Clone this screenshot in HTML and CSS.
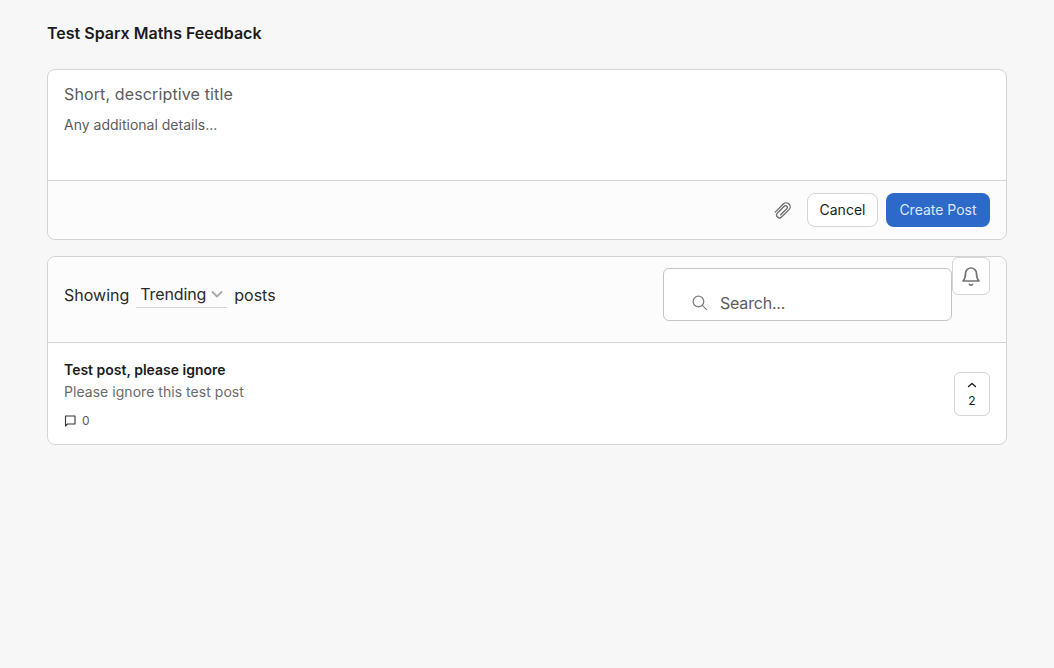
FILE: index.html
```html
<!DOCTYPE html>
<html lang="en">
<head>
<meta charset="utf-8">
<title>Test Sparx Maths Feedback</title>
<link rel="stylesheet" href="styles.css">
</head>
<body>
<main class="page">
  <h1 class="heading">Test Sparx Maths Feedback</h1>
  <section class="card composer">
    <div class="composer-body">
      <div class="title-ph">Short, descriptive title</div>
      <div class="details-ph">Any additional details...</div>
    </div>
    <div class="composer-foot">
      <svg class="clip" width="18" height="18" viewBox="0 0 18 18" fill="none" stroke="currentColor" stroke-width="1.300" stroke-linecap="round" stroke-linejoin="round"><g transform="rotate(45 9 9)"><path d="M5 16V4.500a4 4 0 0 1 8 0v10.500a2.900 2.900 0 0 1-5.800 0V5.500a1.800 1.800 0 0 1 3.600 0V14"/></g></svg>
      <button class="btn btn-cancel">Cancel</button>
      <button class="btn btn-primary">Create Post</button>
    </div>
  </section>
  <section class="card list">
    <div class="toolbar">
      <div class="showing">
        <span>Showing</span>
        <span class="select"><span class="select-label">Trending</span>
          <svg class="chev" width="14" height="14" viewBox="0 0 14 14" fill="none" stroke="currentColor" stroke-width="1.800" stroke-linecap="round" stroke-linejoin="round"><path d="M2.500 5l4.500 4.500L11.500 5"/></svg>
        </span>
        <span>posts</span>
      </div>
      <div class="search">
        <svg class="search-icon" width="17" height="17" viewBox="0 0 24 24" fill="none" stroke="currentColor" stroke-width="1.800" stroke-linecap="round"><circle cx="10.500" cy="10.500" r="7.500"/><path d="M16 16l6 6"/></svg>
        <span class="search-label">Search...</span>
      </div>
      <button class="bell" aria-label="Subscribe">
        <svg width="20" height="22" viewBox="0 0 20 22" fill="none" stroke="currentColor" stroke-width="1.700" stroke-linecap="round" stroke-linejoin="round"><path d="M4.500 8.500a5.500 5.500 0 0 1 11 0c0 4 1 6 2.500 7.500H2c1.500-1.500 2.500-3.500 2.500-7.500z"/><path d="M8.500 19.500a2 2 0 0 0 3 0"/></svg>
      </button>
    </div>
    <article class="post">
      <div class="post-main">
        <h2 class="post-title">Test post, please ignore</h2>
        <p class="post-text">Please ignore this test post</p>
        <div class="post-meta">
          <svg width="12" height="12" viewBox="0 0 12 12" fill="none" stroke="currentColor" stroke-width="1.100" stroke-linejoin="round"><path d="M1.500 1h9.500v8H3.500L1.500 11z"/></svg>
          <span>0</span>
        </div>
      </div>
      <button class="vote">
        <svg width="12" height="8" viewBox="0 0 12 8" fill="none" stroke="currentColor" stroke-width="1.300" stroke-linecap="round" stroke-linejoin="round"><path d="M2.500 5.500L6 2.500l3.500 3"/></svg>
        <span>2</span>
      </button>
    </article>
  </section>
</main>
</body>
</html>
```
FILE: styles.css
```css
* { box-sizing: border-box; }
html, body { margin: 0; height: 100%; }
body {
  background: #f7f7f7;
  color: #1c1c1c;
  font-family: Inter, "Liberation Sans", sans-serif;
  overflow: hidden;
}
.page {
  width: 960px;
  margin-left: 47px;
  padding-top: 23px;
  display: flex;
  flex-direction: column;
}
.heading {
  margin: 0 0 26px;
  font-size: 16px;
  line-height: 20px;
  font-weight: 600;
}
.card {
  background: #fff;
  border: 1px solid #d4d4d4;
  border-radius: 8px;
}
.composer { height: 171px; display: flex; flex-direction: column; margin-bottom: 16px; }
.composer-body { height: 111px; padding: 14px 16px 0; border-bottom: 1px solid #d4d4d4; }
.title-ph { font-size: 16px; line-height: 20px; color: #5c5c5c; margin-bottom: 12px; letter-spacing: 0.13px; }
.details-ph { font-size: 14px; line-height: 18px; color: #5c5c5c; }
.composer-foot {
  flex: 1;
  background: #fcfcfc;
  border-radius: 0 0 8px 8px;
  display: flex;
  align-items: center;
  justify-content: flex-end;
  padding: 0 16px 0 0;
}
.clip { color: #6b6b6b; margin-right: 15px; }
.btn {
  height: 34px;
  border-radius: 8px;
  font: 400 14px/20px Inter, "Liberation Sans", sans-serif;
  padding: 0;
}
.btn-cancel { width: 71px; background: #fff; border: 1px solid #d4d4d4; color: #1c1c1c; margin-right: 8px; }
.btn-primary { width: 104px; background: #2d69c8; border: 0; color: #dce8fa; }
.list { height: 189px; }
.toolbar {
  height: 86px;
  background: #fcfcfc;
  border-bottom: 1px solid #d4d4d4;
  border-radius: 8px 8px 0 0;
  padding: 0 16px;
  display: flex;
  align-items: flex-start;
}
.showing {
  display: flex;
  align-items: flex-start;
  gap: 7px;
  font-size: 16px;
  line-height: 22px;
  color: #2a2a2a;
  margin-top: 27px;
}
.select {
  display: flex;
  align-items: center;
  width: 91px;
  height: 24px;
  padding: 0 0 3px 4px;
  gap: 4px;
  border-bottom: 1px solid #d4d4d4;
}
.select-label { letter-spacing: -0.12px; }
.chev { color: #a8a8a8; }
.search {
  width: 289px;
  height: 53px;
  margin: 11px 0 0 auto;
  background: #fff;
  border: 1px solid #c4c4c4;
  border-radius: 6px;
  display: flex;
  align-items: center;
  padding: 16px 0 0 27px;
  gap: 12px;
  font-size: 16px;
  color: #5c5c5c;
}
.search-label { letter-spacing: -0.2px; }
.search-icon { color: #808080; }
.bell {
  width: 38px;
  height: 38px;
  padding: 0;
  background: #fff;
  border: 1px solid #d4d4d4;
  border-radius: 6px;
  color: #737373;
  display: flex;
  align-items: center;
  justify-content: center;
}
.post {
  display: flex;
  justify-content: space-between;
  align-items: center;
  padding: 0 16px;
  height: 101px;
}
.post-main { align-self: flex-start; padding-top: 18px; }
.post-title { margin: 0 0 4px; font-size: 14px; line-height: 18px; font-weight: 600; }
.post-text { margin: 0 0 12px; font-size: 14px; line-height: 18px; color: #6b6b6b; letter-spacing: 0.04px; }
.post-meta { display: flex; align-items: center; gap: 6px; font-size: 12px; line-height: 16px; color: #5c5c5c; }
.post-meta svg { color: #333; }
.vote {
  width: 36px;
  height: 44px;
  padding: 1px 0 0;
  background: #fff;
  border: 1px solid #d4d4d4;
  border-radius: 6px;
  display: flex;
  flex-direction: column;
  align-items: center;
  justify-content: center;
  gap: 5px;
  font: 400 12px/14px Inter, "Liberation Sans", sans-serif;
  color: #1c1c1c;
}
```
